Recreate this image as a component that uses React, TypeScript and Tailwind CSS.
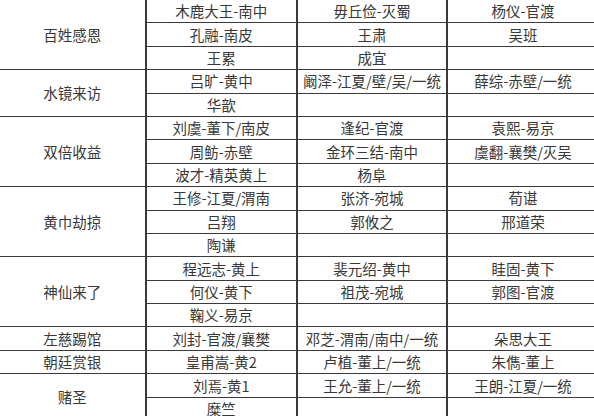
import React from "react";

type Group = { name: string; rows: string[][] };

const groups: Group[] = [
  {
    name: "百姓感恩",
    rows: [
      ["木鹿大王-南中", "毋丘俭-灭蜀", "杨仪-官渡"],
      ["孔融-南皮", "王肃", "吴班"],
      ["王累", "成宜", ""],
    ],
  },
  {
    name: "水镜来访",
    rows: [
      ["吕旷-黄中", "阚泽-江夏/壁/吴/一统", "薛综-赤壁/一统"],
      ["华歆", "", ""],
    ],
  },
  {
    name: "双倍收益",
    rows: [
      ["刘虞-董下/南皮", "逢纪-官渡", "袁熙-易京"],
      ["周鲂-赤壁", "金环三结-南中", "虞翻-襄樊/灭吴"],
      ["波才-精英黄上", "杨阜", ""],
    ],
  },
  {
    name: "黄巾劫掠",
    rows: [
      ["王修-江夏/渭南", "张济-宛城", "荀谌"],
      ["吕翔", "郭攸之", "邢道荣"],
      ["陶谦", "", ""],
    ],
  },
  {
    name: "神仙来了",
    rows: [
      ["程远志-黄上", "裴元绍-黄中", "眭固-黄下"],
      ["何仪-黄下", "祖茂-宛城", "郭图-官渡"],
      ["鞠义-易京", "", ""],
    ],
  },
  { name: "左慈踢馆", rows: [["刘封-官渡/襄樊", "邓芝-渭南/南中/一统", "朵思大王"]] },
  { name: "朝廷赏银", rows: [["皇甫嵩-黄2", "卢植-董上/一统", "朱儁-董上"]] },
  {
    name: "赌圣",
    rows: [
      ["刘焉-黄1", "王允-董上/一统", "王朗-江夏/一统"],
      ["糜竺", "", ""],
    ],
  },
];

const span: Record<number, string> = { 1: "row-span-1", 2: "row-span-2", 3: "row-span-3" };

const cell =
  "flex items-center justify-center border-b-[1.5px] border-[#3a3a3a] whitespace-nowrap";

export default function App() {
  return (
    <div className="w-[594px] h-[416px] overflow-hidden bg-white">
      <div
        className="grid grid-cols-[146.5px_151.5px_150px_150px] auto-rows-[23.4px] text-[14.5px] text-[#383838]"
        style={{ fontFamily: '"Noto Sans CJK SC", "Noto Sans", sans-serif' }}
      >
        {groups.map((g) => (
          <React.Fragment key={g.name}>
            <div className={`${span[g.rows.length]} ${cell} border-r-2`}>{g.name}</div>
            {g.rows.map((r, i) => (
              <React.Fragment key={i}>
                <div className={`${cell} border-r-2`}>{r[0]}</div>
                <div className={`${cell} border-r-2`}>{r[1]}</div>
                <div className={cell}>{r[2]}</div>
              </React.Fragment>
            ))}
          </React.Fragment>
        ))}
      </div>
    </div>
  );
}
